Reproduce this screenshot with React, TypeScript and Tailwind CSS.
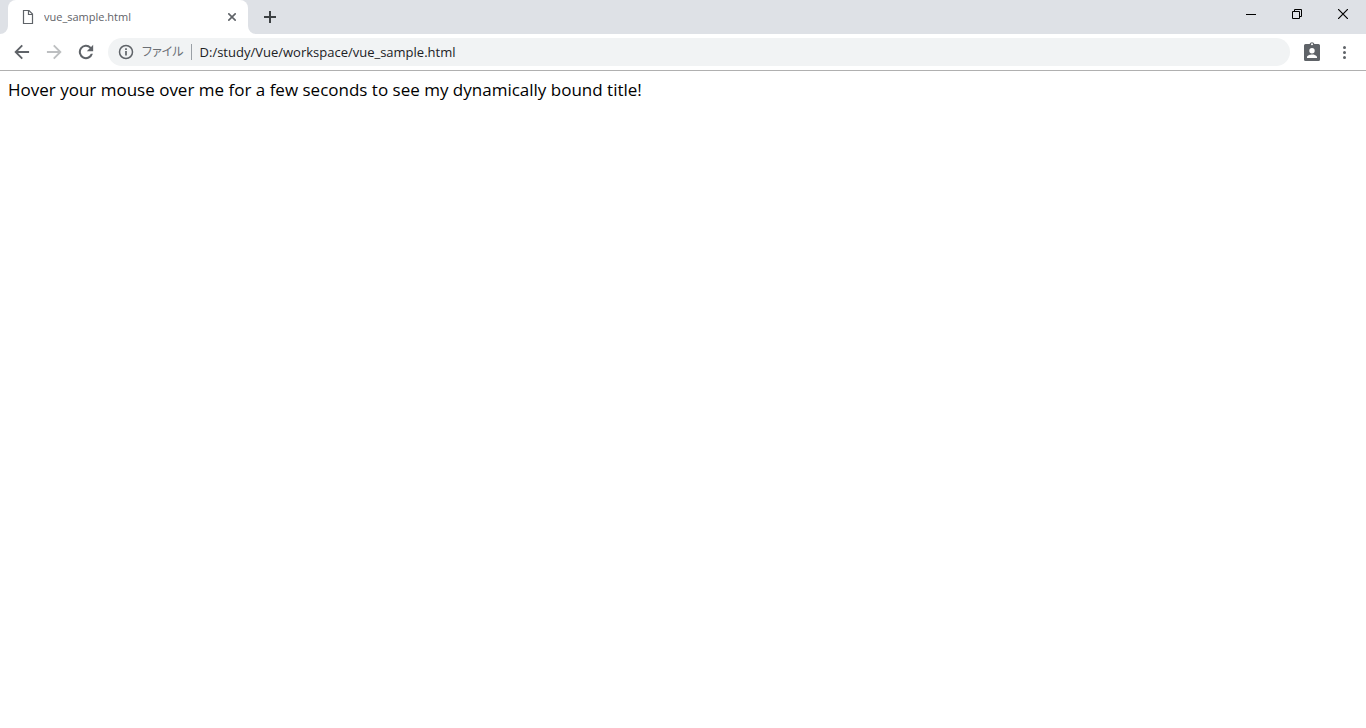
import React, { useState } from 'react';

const PAGE_FILE = 'vue_sample.html';

const ToolbarButton: React.FC<{ label: string; disabled?: boolean; children: React.ReactNode }> = ({ label, disabled, children }) => (
  <button
    type="button"
    aria-label={label}
    disabled={disabled}
    className="flex h-7 w-7 items-center justify-center rounded-full text-[#5f6368] enabled:hover:bg-gray-100 disabled:text-[#bdbfc1]"
  >
    {children}
  </button>
);

const WindowButton: React.FC<{ label: string; children: React.ReactNode }> = ({ label, children }) => (
  <button type="button" aria-label={label} className="flex h-7 w-[46px] items-center justify-center text-black hover:bg-black/10">
    <svg width="10" height="10" viewBox="0 0 10 10" fill="none" stroke="currentColor" strokeWidth="1">
      {children}
    </svg>
  </button>
);

const TabStrip: React.FC = () => (
  <header className="flex h-[34px] bg-[#dee1e6] pl-2">
    {/* Active tab with the curved feet on both sides */}
    <div className="relative flex w-60 items-center rounded-t-lg bg-white pr-2 pl-3">
      <svg className="absolute bottom-0 -left-2 text-white" width="8" height="8" viewBox="0 0 8 8" fill="currentColor">
        <path d="M8 0v8H0a8 8 0 0 0 8-8z" />
      </svg>
      <svg className="absolute -right-2 bottom-0 text-white" width="8" height="8" viewBox="0 0 8 8" fill="currentColor">
        <path d="M0 0v8h8a8 8 0 0 1-8-8z" />
      </svg>
      <svg className="shrink-0 text-[#5f6368]" width="16" height="16" viewBox="0 0 16 16" fill="none" stroke="currentColor" strokeWidth="1.2">
        <path d="M3.5 1.5h5.500l3.500 3.500v9.500h-9z" />
        <path d="M8.500 1.500v4h4" />
      </svg>
      <span className="ml-2 flex-1 truncate text-[11px] leading-4 text-[#5f6368]">{PAGE_FILE}</span>
      <button type="button" aria-label="Close tab" className="flex h-4 w-4 items-center justify-center rounded-full text-[#5f6368] hover:bg-gray-200">
        <svg width="8" height="8" viewBox="0 0 8 8" fill="none" stroke="currentColor" strokeWidth="1.6">
          <path d="M0.300 0.300l7.400 7.400M7.700 0.300l-7.400 7.400" />
        </svg>
      </button>
    </div>

    <button type="button" aria-label="New tab" className="ml-2 flex h-7 w-7 items-center justify-center self-center rounded-full text-[#3c4043] hover:bg-black/10">
      <svg width="12" height="12" viewBox="0 0 12 12" fill="currentColor">
        <path d="M5 0h2v5h5v2H7v5H5V7H0V5h5z" />
      </svg>
    </button>

    <div className="ml-auto flex">
      <WindowButton label="Minimize">
        <path d="M0 5.500h10" />
      </WindowButton>
      <WindowButton label="Restore">
        <path d="M0.500 2.500h7v7h-7zM2.500 2.500v-2h7v7h-2" />
      </WindowButton>
      <WindowButton label="Close">
        <path d="M0 0l10 10M10 0l-10 10" strokeWidth="1.200" />
      </WindowButton>
    </div>
  </header>
);

const Toolbar: React.FC = () => {
  const [address, setAddress] = useState(`D:/study/Vue/workspace/${PAGE_FILE}`);

  return (
    <div className="flex items-center gap-1 border-b border-[#b0b0b0] bg-white px-2 py-1">
      <ToolbarButton label="Back">
        <svg width="20" height="20" viewBox="0 0 24 24" fill="currentColor">
          <path d="M20.500 10.800H7.200l5.900-5.900L11.500 3.300 2.800 12l8.700 8.700 1.600-1.600-5.900-5.900h13.300z" />
        </svg>
      </ToolbarButton>
      <ToolbarButton label="Forward" disabled>
        <svg width="20" height="20" viewBox="0 0 24 24" fill="currentColor">
          <path d="M3.500 10.800h13.300l-5.900-5.900 1.600-1.600 8.700 8.700-8.700 8.700-1.600-1.600 5.900-5.900H3.500z" />
        </svg>
      </ToolbarButton>
      <ToolbarButton label="Reload">
        <svg width="20" height="20" viewBox="0 0 24 24" fill="currentColor">
          <path d="M18.100 5.900A8.600 8.600 0 1 0 20.300 14.200h-2.500A6.200 6.200 0 1 1 16.400 7.600L13 11h7.600V3.400z" />
        </svg>
      </ToolbarButton>

      <div className="ml-1 flex h-7 flex-1 items-center rounded-full bg-[#f1f3f4] pl-[10px]">
        <svg className="shrink-0 text-[#5f6368]" width="16" height="16" viewBox="0 0 16 16" fill="none" stroke="currentColor" strokeWidth="1.500">
          <circle cx="8" cy="8" r="6.500" />
          <path d="M8 7v4.500M8 4.300v1.600" strokeWidth="1.700" />
        </svg>
        <label htmlFor="address" className="ml-2 border-r border-[#9aa0a6] pr-[7px] text-xs leading-4 text-[#6b6f74] [font-feature-settings:'palt']">
          ファイル
        </label>
        <input
          id="address"
          type="text"
          value={address}
          onChange={(e) => setAddress(e.target.value)}
          className="ml-2 min-w-0 flex-1 bg-transparent text-[13px] leading-5 text-[#202124] outline-none"
        />
      </div>

      <div className="ml-1 flex items-center gap-1">
        <ToolbarButton label="Profile">
          <svg width="20" height="20" viewBox="0 0 20 20" fill="currentColor">
            <path
              fillRule="evenodd"
              d="M16.500 2H12.400A2.500 2.500 0 0 0 7.600 2H3.500A1.500 1.500 0 0 0 2 3.500v14A1.500 1.500 0 0 0 3.500 19h13a1.500 1.500 0 0 0 1.500-1.500v-14A1.500 1.500 0 0 0 16.500 2zM10 1.300a1 1 0 1 1 0 2 1 1 0 0 1 0-2zM10 6a2.700 2.700 0 1 1 0 5.400 2.700 2.700 0 0 1 0-5.400zM15 16H5v-1c0-1.700 3.300-2.600 5-2.600s5 .9 5 2.600z"
            />
          </svg>
        </ToolbarButton>
        <ToolbarButton label="Menu">
          <svg width="16" height="16" viewBox="0 0 16 16" fill="currentColor">
            <circle cx="8.500" cy="3.500" r="1.500" />
            <circle cx="8.500" cy="8.500" r="1.500" />
            <circle cx="8.500" cy="13.500" r="1.500" />
          </svg>
        </ToolbarButton>
      </div>
    </div>
  );
};

const App: React.FC = () => (
  <div className="min-h-screen bg-white font-['Open_Sans','Noto_Sans_CJK_JP',sans-serif]">
    <TabStrip />
    <Toolbar />
    <main className="p-2 text-[17px] leading-[22px] text-black">
      <p>Hover your mouse over me for a few seconds to see my dynamically bound title!</p>
    </main>
  </div>
);

export default App;
